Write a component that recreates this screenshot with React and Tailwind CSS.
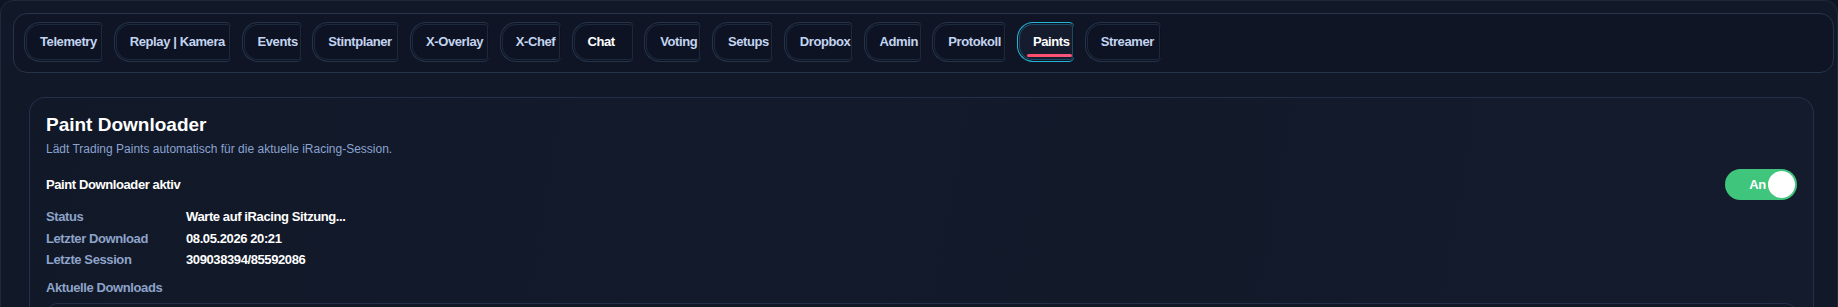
import { useState } from 'react'

const tabs = [
  { label: 'Telemetry', w: 'w-[79px]' },
  { label: 'Replay | Kamera', w: 'w-[117px]' },
  { label: 'Events', w: 'w-[60px]' },
  { label: 'Stintplaner', w: 'w-[87px]' },
  { label: 'X-Overlay', w: 'w-[79px]' },
  { label: 'X-Chef', w: 'w-[61px]' },
  { label: 'Chat', w: 'w-[62px]', hover: true },
  { label: 'Voting', w: 'w-[57px]' },
  { label: 'Setups', w: 'w-[61px]' },
  { label: 'Dropbox', w: 'w-[69px]' },
  { label: 'Admin', w: 'w-[58px]' },
  { label: 'Protokoll', w: 'w-[74px]' },
  { label: 'Paints', w: 'w-[57px]', active: true },
  { label: 'Streamer', w: 'w-[76px]' },
]

const stats = [
  ['Status', 'Warte auf iRacing Sitzung...'],
  ['Letzter Download', '08.05.2026 20:21'],
  ['Letzte Session', '309038394/85592086'],
]

function Tab({ tab }) {
  return (
    <button
      className={
        'relative h-[40px] shrink-0 whitespace-nowrap rounded-l-[16px] rounded-r-[5px] border border-r-0 pl-[15px] text-left text-[13px] font-bold tracking-[-0.4px] ' +
        tab.w +
        (tab.active
          ? ' border-[#25b5d6] bg-[#141c2e] text-white shadow-[inset_0_0_0_1px_#0d1322,inset_0_0_0_2px_#1f4a66]'
          : tab.hover
          ? ' border-[#25334b] bg-[#0d1322] text-white shadow-[inset_0_0_0_1px_#0d1322,inset_0_0_0_2px_#1d293d]'
          : ' border-[#25334b] bg-[#0d1322] text-[#c3d4f0] shadow-[inset_0_0_0_1px_#0d1322,inset_0_0_0_2px_#1d293d]')
      }
    >
      {tab.label}
      {tab.active && (
        <span className="absolute bottom-[4px] left-[9px] h-[3px] w-[45px] rounded-full bg-gradient-to-r from-[#ff4d6a] to-[#f6567c]" />
      )}
    </button>
  )
}

export default function App() {
  const [on, setOn] = useState(true)

  return (
    <div className="min-h-screen bg-[#0e1422] font-['Liberation_Sans',sans-serif]">
      <div className="rounded-t-[14px] border border-b-0 border-[#1e293b] bg-[#111827] pl-3 pr-[3px] pt-3">
        {/* tab bar */}
        <nav className="flex items-center gap-[10.75px] rounded-[14px] border border-[#26344b] bg-[#0f1525] px-[10px] pb-[10px] pt-[8px]">
          {tabs.map((t) => (
            <Tab key={t.label} tab={t} />
          ))}
        </nav>

        {/* paint downloader card */}
        <section className="ml-4 mr-5 mt-[24px] rounded-t-[16px] border border-b-0 border-[#243049] bg-[linear-gradient(100deg,#111827_0%,#131a2c_35%,#121a2a_60%,#141b2d_100%)] px-4 pt-[15px]">
          <h2 className="text-[19px] font-bold leading-[24px] text-white">Paint Downloader</h2>
          <p className="mt-[4px] text-[12px] leading-[16px] text-[#8aa3d0]">
            Lädt Trading Paints automatisch für die aktuelle iRacing-Session.
          </p>

          <div className="mt-[12px] flex h-[31px] items-center justify-between">
            <span className="text-[13px] font-bold tracking-[-0.4px] text-white">Paint Downloader aktiv</span>
            <button
              onClick={() => setOn((o) => !o)}
              className="flex h-[31px] w-[72px] items-center justify-end gap-[2px] rounded-full bg-[#40c57c] pr-[2px]"
            >
              <span className="text-[13px] font-bold tracking-[-0.3px] text-white">{on ? 'An' : 'Aus'}</span>
              <span className="h-[27px] w-[27px] rounded-full bg-white" />
            </button>
          </div>

          <div className="mt-[6px]">
            {stats.map(([k, v]) => (
              <div key={k} className="flex h-[21.5px] items-center text-[13px] font-bold tracking-[-0.4px]">
                <span className="w-[140px] text-[#8ea3c8]">{k}</span>
                <span className="text-white">{v}</span>
              </div>
            ))}
          </div>

          <div className="mt-[8.5px] text-[13px] font-bold leading-[18px] tracking-[-0.4px] text-[#8ea3c8]">
            Aktuelle Downloads
          </div>
          <div className="mt-[6px] h-[40px] rounded-t-[12px] border border-b-0 border-[#243049] bg-[#111827]" />
        </section>
      </div>
    </div>
  )
}
